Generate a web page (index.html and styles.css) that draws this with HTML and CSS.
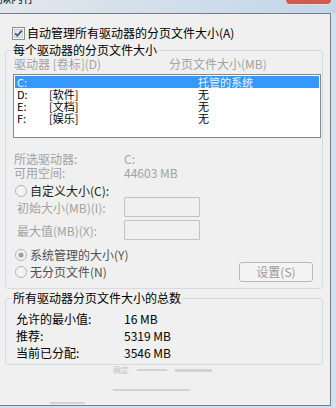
FILE: index.html
```html
<!DOCTYPE html>
<html lang="zh-CN">
<head>
    <meta charset="UTF-8">
    <meta name="viewport" content="width=device-width, initial-scale=1.0">
    <title>虚拟内存</title>
    <link rel="stylesheet" href="styles.css">
</head>
<body>

    <div class="window">
        <div class="titlebar">
            <span class="title">虚拟内存</span>
            <span class="close"></span>
        </div>

        <div class="client">
            <!-- Auto manage checkbox -->
            <label class="auto">
                <svg class="check" width="13" height="13" viewBox="0 0 13 13">
                    <rect x="0.5" y="0.5" width="12" height="12" fill="#f6f6f6" stroke="#8e8f8f"/>
                    <rect x="2.5" y="2.5" width="8" height="8" fill="#e4e8ec" stroke="#c9cfd6"/>
                    <path d="M3.2 6.4 L5.4 8.8 L9.8 3.6" fill="none" stroke="#3f5582" stroke-width="1.7"/>
                </svg>
                自动管理所有驱动器的分页文件大小(A)
            </label>

            <fieldset class="group">
                <legend>每个驱动器的分页文件大小</legend>
                <div class="list-head">
                    <span class="col-drive">驱动器 [卷标](D)</span>
                    <span>分页文件大小(MB)</span>
                </div>
                <div class="listbox">
                    <div class="row selected"><span class="c1">C:</span><span class="c2"></span><span>托管的系统</span></div>
                    <div class="row"><span class="c1">D:</span><span class="c2">[软件]</span><span>无</span></div>
                    <div class="row"><span class="c1">E:</span><span class="c2">[文档]</span><span>无</span></div>
                    <div class="row"><span class="c1">F:</span><span class="c2">[娱乐]</span><span>无</span></div>
                </div>

                <div class="info">
                    <div class="pair"><span class="key">所选驱动器:</span><span>C:</span></div>
                    <div class="pair"><span class="key">可用空间:</span><span>44603 MB</span></div>
                </div>

                <div class="radio custom">
                    <svg width="12" height="12" viewBox="0 0 12 12"><circle cx="6" cy="6" r="5.5" fill="#f3f3f3" stroke="#b4b4b4"/></svg>
                    自定义大小(C):
                </div>
                <div class="field">
                    <span class="field-label">初始大小(MB)(I):</span>
                    <span class="input"></span>
                </div>
                <div class="field second">
                    <span class="field-label">最大值(MB)(X):</span>
                    <span class="input"></span>
                </div>

                <div class="radio system">
                    <svg width="12" height="12" viewBox="0 0 12 12"><circle cx="6" cy="6" r="5.5" fill="#f3f3f3" stroke="#b4b4b4"/><circle cx="6" cy="6" r="2.6" fill="#9aa3ad"/></svg>
                    系统管理的大小(Y)
                </div>
                <div class="bottom-row">
                    <div class="radio none">
                        <svg width="12" height="12" viewBox="0 0 12 12"><circle cx="6" cy="6" r="5.5" fill="#f3f3f3" stroke="#b4b4b4"/></svg>
                        无分页文件(N)
                    </div>
                    <span class="button">设置(S)</span>
                </div>
            </fieldset>

            <fieldset class="group totals">
                <legend>所有驱动器分页文件大小的总数</legend>
                <div class="total"><span class="total-key">允许的最小值:</span><span>16 MB</span></div>
                <div class="total"><span class="total-key">推荐:</span><span>5319 MB</span></div>
                <div class="total"><span class="total-key">当前已分配:</span><span>3546 MB</span></div>
            </fieldset>

            <!-- faint leftovers of the hidden buttons -->
            <div class="ghost">
                <div class="ghost-row first"><span class="ghost-text">确定</span><i class="streak s1"></i><i class="streak s2"></i></div>
                <div class="ghost-row second"><i class="streak s3"></i></div>
                <div class="ghost-row third"><i class="streak s4"></i></div>
            </div>
        </div>
    </div>

</body>
</html>
```

FILE: styles.css
```css
body {
    margin: 0;
    font-family: "Noto Sans CJK SC", "Liberation Sans", sans-serif;
    font-size: 12px;
    color: #000;
}
.window {
    width: 336px;
    height: 408px;
    display: flex;
    flex-direction: column;
    background: #d3e1ef;
    overflow: hidden;
}
.titlebar {
    height: 13px;
    display: flex;
    justify-content: space-between;
    background: linear-gradient(to right, #e2e7ed, #d2deea 50%, #c3d6ea);
    overflow: hidden;
}
.title {
    margin: -9px 0 0 -13px;
    line-height: 14px;
    color: #222;
}
.close {
    width: 45px;
    height: 4px;
    margin-right: 4px;
    border: 1px solid #f0d8d4;
    border-top: none;
    border-radius: 0 0 5px 5px;
    background: #cf5b4c;
}
.client {
    box-sizing: border-box;
    width: 331px;
    flex: 1;
    margin-bottom: 2px;
    background: #f0f0f0;
    border: 1px solid #6f7d8c;
    border-left: none;
}
.auto {
    display: flex;
    align-items: center;
    gap: 2px;
    height: 14px;
    margin: 12px 0 0 12px;
    line-height: 14px;
}
.group {
    box-sizing: border-box;
    width: 318px;
    margin: 3px 0 0 5px;
    padding: 0 9px 6px 8px;
    border: 1px solid #d5dbe1;
    border-radius: 3px;
    min-inline-size: 0;
}
.group legend {
    margin-left: -2px;
    padding: 0 1px;
    line-height: 14px;
}
.list-head {
    display: flex;
    line-height: 14px;
    color: #a2a2a2;
}
.col-drive {
    width: 155px;
}
.listbox {
    box-sizing: border-box;
    width: 308px;
    height: 64px;
    margin: 3px 0 0 -1px;
    padding-top: 1px;
    background: #fff;
    border: 1px solid #828790;
}
.row {
    display: flex;
    margin: 0 1px;
    padding-left: 2px;
    height: 12px;
    font-size: 11px;
    line-height: 12px;
}
.row .c1 {
    width: 32px;
}
.row .c2 {
    width: 149px;
}
.selected {
    background: #3399ff;
    color: #eaf3ff;
}
.info {
    margin-top: 14px;
    line-height: 14px;
    color: #a2a2a2;
}
.pair {
    display: flex;
}
.key {
    width: 110px;
}
.radio {
    display: flex;
    align-items: center;
    gap: 3px;
    margin-left: 1px;
    line-height: 14px;
    color: #505050;
}
.custom {
    margin-top: 5px;
    line-height: 12px;
    color: #1e1e1e;
}
.field {
    display: flex;
    align-items: center;
    height: 20px;
    color: #a2a2a2;
}
.field.second {
    margin-top: 3px;
}
.field-label {
    width: 107px;
    padding-left: 3px;
}
.input {
    box-sizing: border-box;
    width: 76px;
    height: 20px;
    border: 1px solid #c2c2c2;
    border-radius: 1px;
    background: #f0f0f0;
}
.system {
    margin-top: 8px;
}
.bottom-row {
    display: flex;
    justify-content: space-between;
    align-items: center;
    height: 20px;
}
.button {
    box-sizing: border-box;
    width: 74px;
    height: 20px;
    line-height: 18px;
    text-align: center;
    color: #9a9a9a;
    background: #f4f4f4;
    border: 1px solid #b9b9b9;
    border-radius: 3px;
}
.totals {
    margin-top: 2px;
    padding: 5px 9px 3px 8px;
}
.total {
    display: flex;
    padding-left: 2px;
    line-height: 17px;
}
.total-key {
    width: 108px;
}
.ghost {
    display: flex;
    flex-direction: column;
}
.ghost-row {
    display: flex;
    align-items: center;
}
.ghost-row.first {
    height: 8px;
    margin: 1px 0 0 113px;
}
.ghost-text {
    width: 24px;
    font-size: 8px;
    line-height: 8px;
    color: #c2c2c2;
}
.streak {
    display: block;
    height: 2px;
    background: #d2d2d2;
}
.s1 {
    width: 30px;
}
.s2 {
    width: 37px;
    margin-left: 8px;
    height: 3px;
}
.ghost-row.second {
    margin: 15px 0 0 113px;
}
.s3 {
    width: 77px;
}
.ghost-row.third {
    margin: 11px 0 0 50px;
}
.s4 {
    width: 35px;
}
```
